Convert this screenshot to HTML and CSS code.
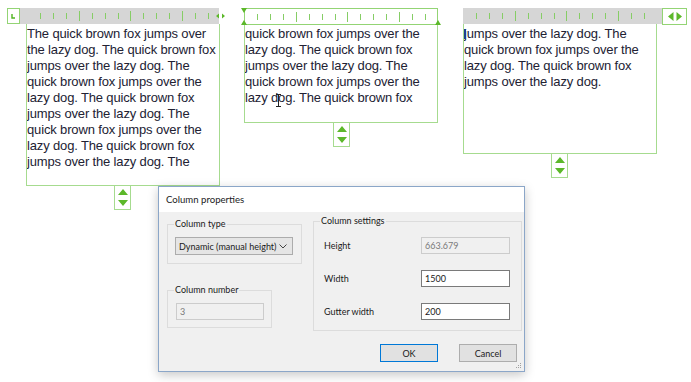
FILE: index.html
```html
<!DOCTYPE html>
<html lang="en">
<head>
  <meta charset="UTF-8" />
  <title>Column properties</title>
  <link rel="stylesheet" href="styles.css">
</head>
<body>
  <div class="canvas">

    <!-- column 1 -->
    <div class="frame frame-1">
      <div class="toolbar">
        <div class="corner-box">
          <svg width="5" height="5" viewBox="0 0 5 5"><path d="M1 0V4H4" fill="none" stroke="#4fb41f" stroke-width="1.4"/></svg>
        </div>
        <div class="ruler ruler-1">
          <span></span><span></span><span></span><span class="long"></span>
          <span></span><span></span><span></span><span class="long"></span>
          <span></span><span></span><span></span><span class="long"></span>
          <span></span><span></span>
        </div>
        <svg class="mini-arrows" width="9" height="6" viewBox="0 0 9 6">
          <path d="M0 3L3 0.5V5.5Z M9 3L6 0.5V5.5Z" fill="#5cb82a"/>
        </svg>
      </div>
      <div class="text-body body-1">The quick brown fox jumps over<br>the lazy dog. The quick brown fox<br>jumps over the lazy dog. The<br>quick brown fox jumps over the<br>lazy dog. The quick brown fox<br>jumps over the lazy dog. The<br>quick brown fox jumps over the<br>lazy dog. The quick brown fox<br>jumps over the lazy dog. The</div>
      <div class="handle handle-1">
        <svg width="10" height="17" viewBox="0 0 10 17"><path d="M5 0L10 6H0Z M5 17L10 11H0Z" fill="#5cb82a"/></svg>
      </div>
    </div>

    <!-- column 2 -->
    <div class="frame frame-2">
      <div class="toolbar toolbar-2">
        <div class="ruler ruler-2">
          <span></span><span></span><span></span><span class="long"></span>
          <span></span><span></span><span></span><span class="long"></span>
          <span></span><span></span><span></span><span class="long"></span>
          <span></span><span></span>
        </div>
        <span class="marker marker-tl"></span>
        <span class="marker marker-bl"></span>
        <span class="marker marker-br"></span>
      </div>
      <div class="text-body body-2">quick brown fox jumps over the<br>lazy dog. The quick brown fox<br>jumps over the lazy dog. The<br>quick brown fox jumps over the<br>lazy dog. The quick brown fox
        <svg class="ibeam" width="7" height="13" viewBox="0 0 7 13"><path d="M1 0.5H6 M3.5 0.5V12.5 M1 12.5H6" fill="none" stroke="#222" stroke-width="1"/></svg>
      </div>
      <div class="handle handle-2">
        <svg width="10" height="17" viewBox="0 0 10 17"><path d="M5 0L10 6H0Z M5 17L10 11H0Z" fill="#5cb82a"/></svg>
      </div>
    </div>

    <!-- column 3 -->
    <div class="frame frame-3">
      <div class="toolbar">
        <div class="ruler ruler-3">
          <span></span><span></span><span></span><span class="long"></span>
          <span></span><span></span><span></span><span class="long"></span>
          <span></span><span></span><span></span><span class="long"></span>
          <span></span><span></span>
        </div>
        <div class="arrow-box">
          <svg width="14" height="9" viewBox="0 0 14 9"><path d="M0 4.5L5.5 0V9Z M14 4.5L8.5 0V9Z" fill="#5cb82a"/></svg>
        </div>
      </div>
      <div class="text-body body-3"><span class="caret"></span>jumps over the lazy dog. The<br>quick brown fox jumps over the<br>lazy dog. The quick brown fox<br>jumps over the lazy dog.</div>
      <div class="handle handle-3">
        <svg width="10" height="17" viewBox="0 0 10 17"><path d="M5 0L10 6H0Z M5 17L10 11H0Z" fill="#5cb82a"/></svg>
      </div>
    </div>

    <!-- dialog -->
    <div class="dialog">
      <div class="dialog-title">Column properties</div>
      <div class="dialog-body">
        <div class="dialog-left">
          <div class="group group-type">
            <span class="group-label">Column type</span>
            <div class="combo">
              <span>Dynamic (manual height)</span>
              <svg width="8" height="5" viewBox="0 0 8 5"><path d="M0.5 0.5L4 4L7.5 0.5" fill="none" stroke="#444" stroke-width="1"/></svg>
            </div>
          </div>
          <div class="group group-number">
            <span class="group-label">Column number</span>
            <div class="field disabled">3</div>
          </div>
        </div>
        <div class="group group-settings">
          <span class="group-label">Column settings</span>
          <div class="row">
            <span>Height</span>
            <div class="field disabled">663.679</div>
          </div>
          <div class="row">
            <span>Width</span>
            <div class="field">1500</div>
          </div>
          <div class="row">
            <span>Gutter width</span>
            <div class="field">200</div>
          </div>
        </div>
      </div>
      <div class="dialog-buttons">
        <button class="btn btn-default">OK</button>
        <button class="btn">Cancel</button>
      </div>
      <svg class="grip" width="7" height="7" viewBox="0 0 7 7">
        <path d="M5 1h1v1h-1z M3 3h1v1h-1z M5 3h1v1h-1z M1 5h1v1h-1z M3 5h1v1h-1z M5 5h1v1h-1z" fill="#a0a0a0"/>
      </svg>
    </div>

  </div>
</body>
</html>
```

FILE: styles.css
```css
* {
  box-sizing: border-box;
}

html, body {
  margin: 0;
  padding: 0;
  background: #ffffff;
}

/* the page canvas where text frames sit */
.canvas {
  position: relative;
  width: 691px;
  height: 382px;
  overflow: hidden;
}

/* ===== text frames ===== */
.frame {
  position: absolute;
  top: 8px;
}

.frame-1 { left: 7px; }
.frame-2 { left: 244px; }
.frame-3 { left: 463px; }

.toolbar {
  position: relative;
  display: flex;
  height: 16px;
}

.corner-box {
  width: 13px;
  height: 16px;
  border: 1px solid #93d474;
  background: #fff;
  display: flex;
  align-items: center;
  justify-content: center;
}

.ruler {
  display: flex;
  align-items: center;
  gap: 11.93px;
  background: #d6d6d6;
  height: 16px;
}

.ruler span {
  width: 1px;
  height: 6px;
  background: #86cd66;
}

.ruler span.long {
  height: 10px;
}

.ruler-1 {
  width: 199px;
  padding-left: 20px;
}

.ruler-3 {
  width: 199px;
  padding-left: 13px;
}

.mini-arrows {
  position: absolute;
  left: 209px;
  top: 5px;
}

/* toolbar of the selected frame */
.toolbar-2 {
  width: 194px;
  height: 17px;
  border: 1px solid #93d474;
  background: #fff;
}

.ruler-2 {
  width: 100%;
  height: 15px;
  padding-left: 12px;
  background: transparent;
}

.marker {
  position: absolute;
  width: 0;
  height: 0;
  border-left: 3.5px solid transparent;
  border-right: 3.5px solid transparent;
}

.marker-tl {
  left: -4px;
  top: -1px;
  border-top: 5px solid #5cb82a;
}

.marker-bl {
  left: -4px;
  bottom: -1px;
  border-bottom: 5px solid #5cb82a;
}

.marker-br {
  right: -4px;
  bottom: -1px;
  border-bottom: 5px solid #5cb82a;
}

.arrow-box {
  width: 25px;
  height: 17px;
  border: 1px solid #93d474;
  background: #fff;
  display: flex;
  align-items: center;
  justify-content: center;
}

/* text area of a frame */
.text-body {
  position: relative;
  width: 194px;
  border: 1px solid #a6db8f;
  border-top: none;
  padding: 2px 0 0 0;
  font-family: "Liberation Sans", Arial, sans-serif;
  font-size: 13px;
  letter-spacing: -0.15px;
  line-height: 16px;
  color: #222233;
  white-space: nowrap;
  overflow: hidden;
}

.body-1 {
  margin-left: 19px;
  width: 194px;
  height: 162px;
}

.body-2 {
  height: 98px;
  padding-top: 1px;
}

.body-3 {
  width: 194px;
  height: 130px;
}

.ibeam {
  position: absolute;
  left: 30px;
  top: 69px;
}

.caret {
  position: absolute;
  left: 0;
  top: 5px;
  width: 2px;
  height: 10px;
  background: #1f3f8f;
}

/* up / down drag handle under a frame */
.handle {
  width: 17px;
  height: 24px;
  border: 1px solid #a6db8f;
  border-top: none;
  background: #fff;
  display: flex;
  align-items: center;
  justify-content: center;
}

.handle-1 { margin-left: 107px; }
.handle-2 { margin-left: 89px; }
.handle-3 { margin-left: 88px; }

/* ===== Column properties dialog ===== */
.dialog {
  position: absolute;
  left: 158px;
  top: 186px;
  width: 367px;
  height: 186px;
  border: 1px solid #8ba6c8;
  background: #f0f0f0;
  box-shadow: 0 3px 10px rgba(0, 0, 0, 0.22);
  font-family: Lato, "Open Sans", sans-serif;
  font-size: 9px;
  color: #1a1a1a;
}

.dialog-title {
  height: 25px;
  background: #fff;
  padding-left: 7px;
  display: flex;
  align-items: center;
  font-size: 9.6px;
  color: #222;
}

.dialog-body {
  display: flex;
  gap: 11px;
  padding: 9px 2px 0 8px;
}

.dialog-left {
  display: flex;
  flex-direction: column;
  gap: 26px;
  padding-top: 3px;
}

.group {
  border: 1px solid #dcdcdc;
}

.group-label {
  display: block;
  width: max-content;
  margin: -7px 0 0 6px;
  padding: 0 1px;
  line-height: 12px;
  background: #f0f0f0;
}

.group-type {
  width: 135px;
  height: 40px;
}

.combo {
  margin: 7px 0 0 7px;
  width: 118px;
  height: 18px;
  border: 1px solid #acacac;
  background: #e5e5e5;
  display: flex;
  align-items: center;
  justify-content: space-between;
  padding: 0 5px 0 3px;
  white-space: nowrap;
}

.group-number {
  width: 105px;
  height: 38px;
}

.group-number .field {
  margin: 7px 0 0 8px;
}

.field {
  width: 88px;
  height: 17px;
  border: 1px solid #7a7a7a;
  background: #fff;
  display: flex;
  align-items: center;
  padding-left: 3px;
}

.field.disabled {
  border-color: #cccccc;
  background: #f0f0f0;
  color: #7a7a7a;
}

.group-settings {
  width: 209px;
  height: 110px;
  display: flex;
  flex-direction: column;
}

.group-settings .group-label {
  margin-bottom: 10px;
}

.row {
  display: flex;
  align-items: center;
  justify-content: space-between;
  height: 17px;
  margin: 0 11px 16px 10px;
}

.row .field {
  width: 89px;
}

.dialog-buttons {
  display: flex;
  justify-content: flex-end;
  gap: 21px;
  padding: 13px 7px 0 0;
}

.btn {
  width: 58px;
  height: 18px;
  border: 1px solid #adadad;
  background: #e1e1e1;
  font-family: inherit;
  font-size: 9px;
  color: #1a1a1a;
  padding: 0;
}

.btn-default {
  border-color: #0078d7;
}

.grip {
  position: absolute;
  right: 2px;
  bottom: 2px;
}
```
